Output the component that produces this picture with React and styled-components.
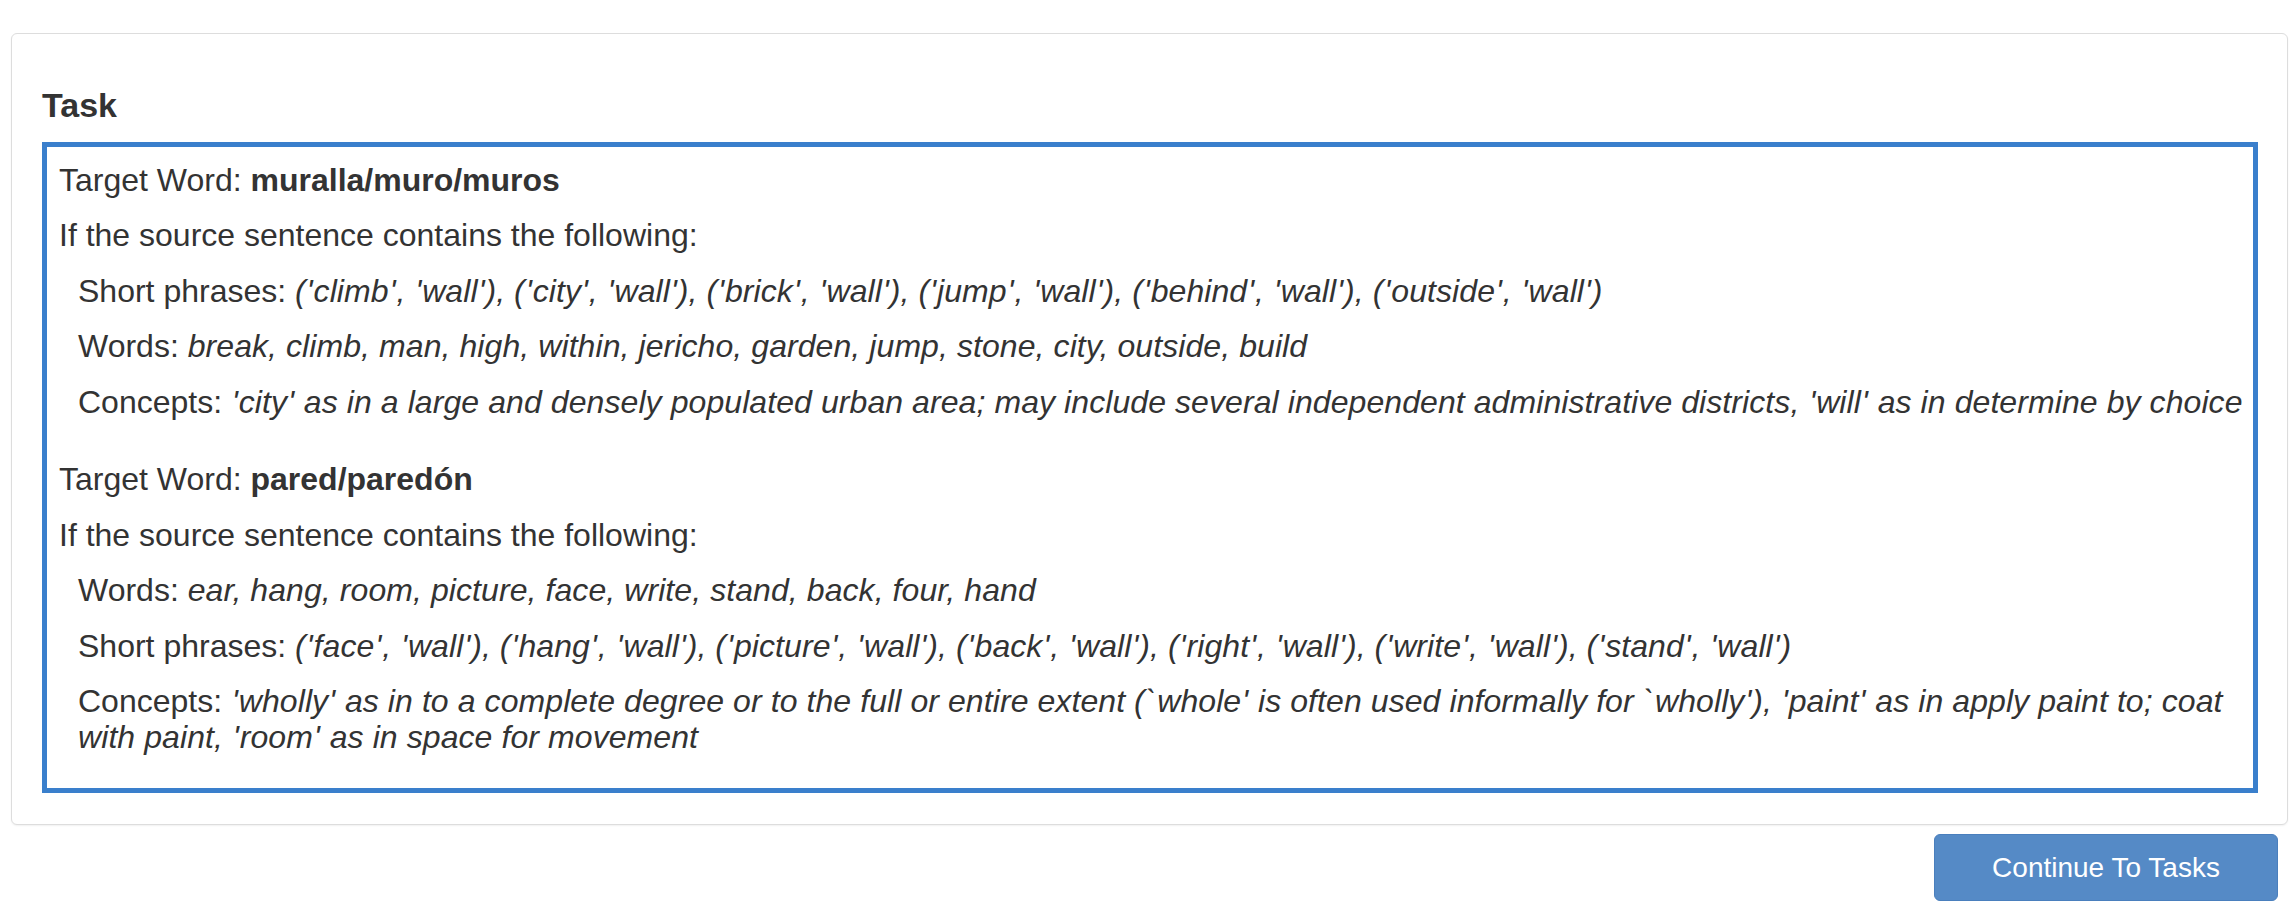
import React from 'react';
import styled, { createGlobalStyle } from 'styled-components';

const GlobalStyle = createGlobalStyle`
  body {
    margin: 0;
    background: #fff;
    color: #333;
    font-family: "Liberation Sans", Arial, Helvetica, sans-serif;
  }
`;

const Page = styled.div`
  padding: 33px 2px 20px 11px;
`;

const Panel = styled.section`
  border: 1px solid #ddd;
  border-radius: 6px;
  box-shadow: 0 1px 2px rgba(0, 0, 0, 0.06);
  padding: 30px 29px 31px 30px;
  background: #fff;
`;

const Heading = styled.h3`
  font-size: 34px;
  font-weight: 700;
  line-height: 37px;
  margin: 22.5px 0 18px;
`;

const TaskBox = styled.div`
  border: 5px solid #3a7fcc;
  padding: 15px 2px 13.5px 12px;
`;

// p margin collapses into this one, so it holds the whole gap
const Group = styled.div`
  margin-bottom: 41.5px;

  &:last-child {
    margin-bottom: 0;
  }
`;

const Line = styled.p`
  font-size: 32px;
  line-height: 36px;
  margin: 0 0 19.5px;
  padding-left: ${(p) => (p.$indent ? '19px' : '0')};
`;

const Em = styled.em`
  font-style: italic;
  letter-spacing: 0.08px;
`;

const Quote = styled.span`
  padding: 0 0.8px;
`;

const Footer = styled.div`
  display: flex;
  justify-content: flex-end;
  padding: 9px 10px 0 0;
`;

const Button = styled.button`
  width: 344px;
  height: 67px;
  font-family: inherit;
  font-size: 28px;
  color: #fff;
  background: #558ac6;
  border: 1px solid #4a7fbd;
  border-radius: 6px;
  cursor: pointer;
`;

const groups = [
  {
    word: 'muralla/muro/muros',
    rows: [
      ['Short phrases', "('climb', 'wall'), ('city', 'wall'), ('brick', 'wall'), ('jump', 'wall'), ('behind', 'wall'), ('outside', 'wall')"],
      ['Words', 'break, climb, man, high, within, jericho, garden, jump, stone, city, outside, build'],
      ['Concepts', "'city' as in a large and densely populated urban area; may include several independent administrative districts, 'will' as in determine by choice"],
    ],
  },
  {
    word: 'pared/paredón',
    rows: [
      ['Words', 'ear, hang, room, picture, face, write, stand, back, four, hand'],
      ['Short phrases', "('face', 'wall'), ('hang', 'wall'), ('picture', 'wall'), ('back', 'wall'), ('right', 'wall'), ('write', 'wall'), ('stand', 'wall')"],
      ['Concepts', "'wholly' as in to a complete degree or to the full or entire extent (`whole' is often used informally for `wholly'), 'paint' as in apply paint to; coat with paint, 'room' as in space for movement"],
    ],
  },
];

// quote marks get a little air, as in the original rendering
const Value = ({ text }) => (
  <Em>
    {text.split(/(['`])/).map((part, i) =>
      part === "'" || part === '`' ? <Quote key={i}>{part}</Quote> : part
    )}
  </Em>
);

export default function App() {
  return (
    <Page>
      <GlobalStyle />
      <Panel>
        <Heading>Task</Heading>
        <TaskBox>
          {groups.map((g) => (
            <Group key={g.word}>
              <Line>
                Target Word: <strong>{g.word}</strong>
              </Line>
              <Line>If the source sentence contains the following:</Line>
              {g.rows.map(([label, text]) => (
                <Line $indent key={label}>
                  {label}: <Value text={text} />
                </Line>
              ))}
            </Group>
          ))}
        </TaskBox>
      </Panel>
      <Footer>
        <Button>Continue To Tasks</Button>
      </Footer>
    </Page>
  );
}
